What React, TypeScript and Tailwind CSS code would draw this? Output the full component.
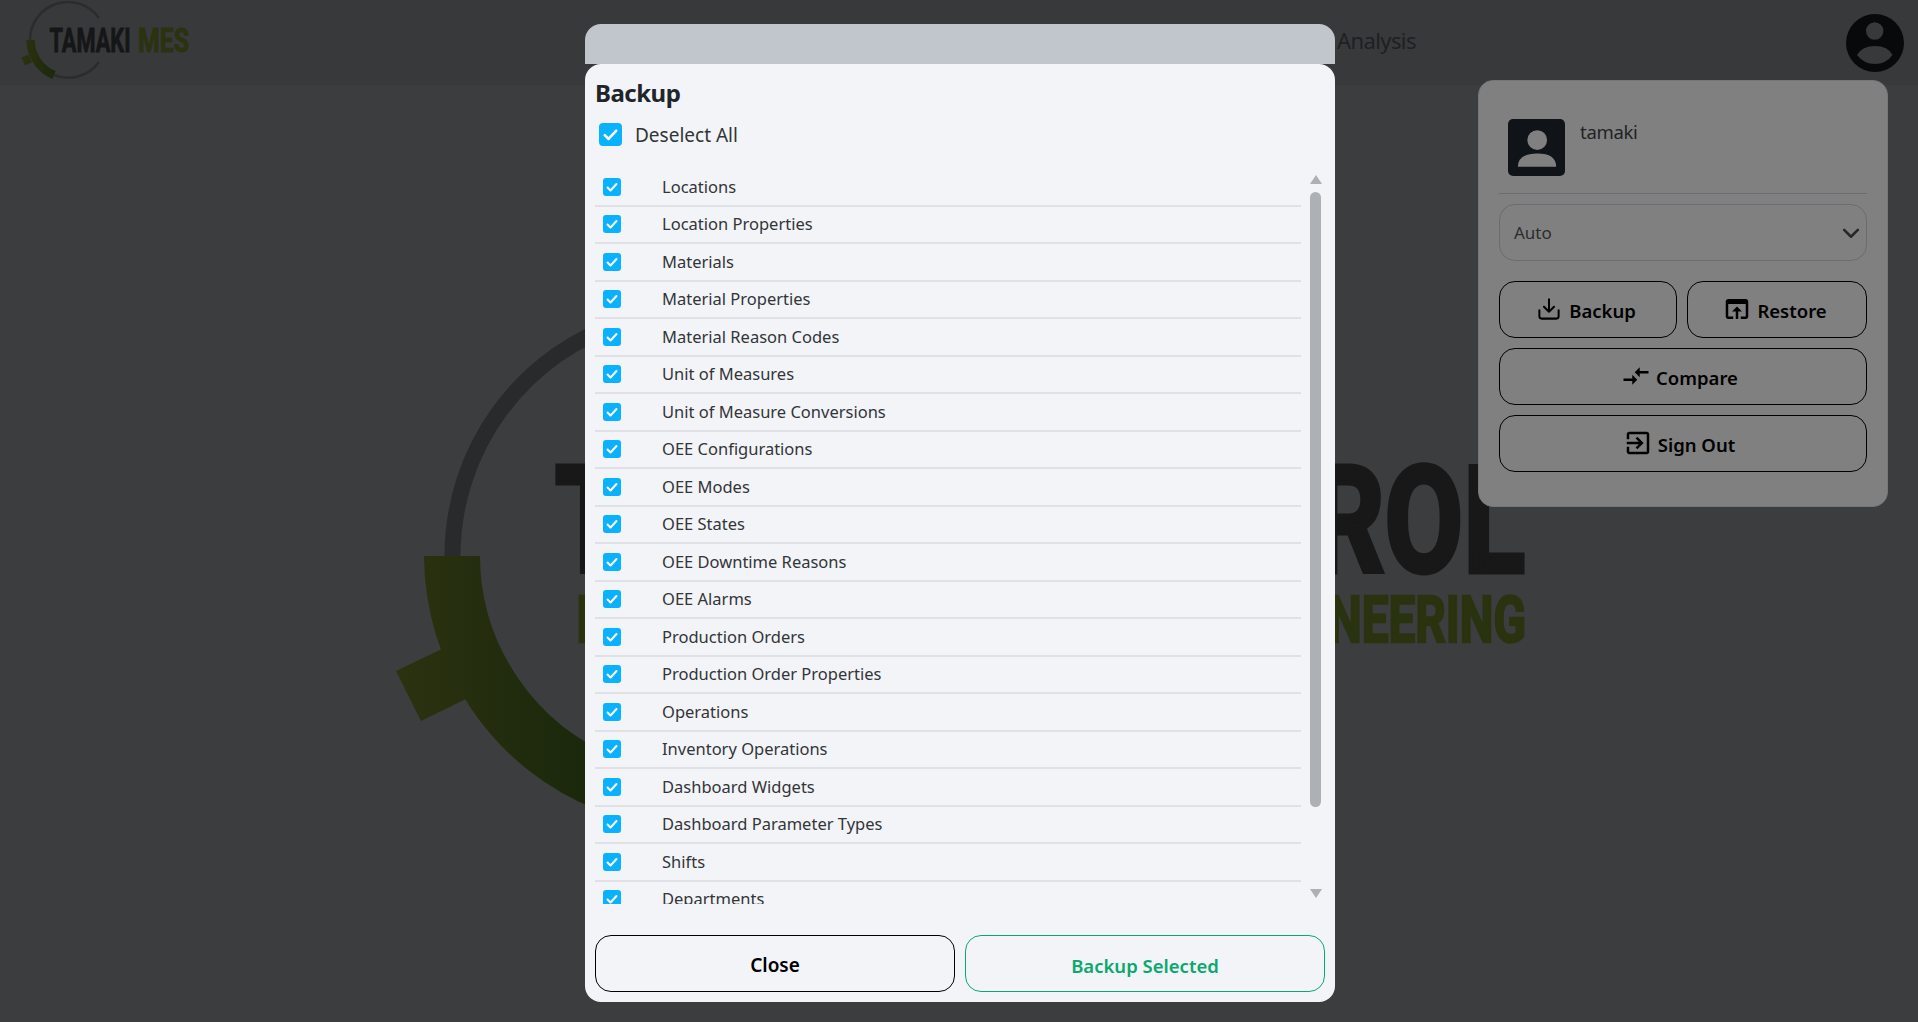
import React from "react";

const ITEMS = [
  "Locations",
  "Location Properties",
  "Materials",
  "Material Properties",
  "Material Reason Codes",
  "Unit of Measures",
  "Unit of Measure Conversions",
  "OEE Configurations",
  "OEE Modes",
  "OEE States",
  "OEE Downtime Reasons",
  "OEE Alarms",
  "Production Orders",
  "Production Order Properties",
  "Operations",
  "Inventory Operations",
  "Dashboard Widgets",
  "Dashboard Parameter Types",
  "Shifts",
  "Departments",
];

function Check({ big }: { big?: boolean }) {
  return (
    <span
      className={
        big
          ? "flex h-[23px] w-[23px] shrink-0 items-center justify-center rounded-[4px] bg-[#0ab1ff]"
          : "flex h-[18px] w-[18px] shrink-0 items-center justify-center rounded-[3px] bg-[#0ab1ff]"
      }
    >
      <svg viewBox="0 0 18 18" className={big ? "h-[23px] w-[23px]" : "h-[18px] w-[18px]"} fill="none" stroke="#fff" strokeWidth="2" strokeLinecap="round" strokeLinejoin="round">
        <path d="M4.5 9.5l3 3 6-6.5" />
      </svg>
    </span>
  );
}

function NavLogo() {
  return (
    <svg viewBox="0 0 200 85" className="h-[85px] w-[200px] shrink-0">
      <defs>
        <linearGradient id="smallGreen" gradientUnits="userSpaceOnUse" x1="21" y1="0" x2="60" y2="0">
          <stop offset="0" stopColor="#2b3210" />
          <stop offset="1" stopColor="#1a270c" />
        </linearGradient>
      </defs>
      <path d="M30 40A38 38 0 0 1 99 18" fill="none" stroke="#2b2c2d" strokeWidth="2.5" />
      <path d="M54 75A38 38 0 0 0 99 62" fill="none" stroke="#2b2c2d" strokeWidth="2.5" />
      <path d="M30.5 40A38 38 0 0 0 54 75" fill="none" stroke="url(#smallGreen)" strokeWidth="8.5" />
      <polygon points="21.2,57.8 25,65.6 32,62.3 28,54.6" fill="url(#smallGreen)" />
      <text x="49.5" y="51.6" textLength="81" lengthAdjust="spacingAndGlyphs" fontSize="33" className="fill-[#151617] stroke-[#151617] stroke-[0.8px] font-['Roboto',sans-serif] font-bold">
        TAMAKI
      </text>
      <text x="138" y="51.6" textLength="51" lengthAdjust="spacingAndGlyphs" fontSize="33" className="fill-[#2a3210] stroke-[#2a3210] stroke-[0.8px] font-['Roboto',sans-serif] font-bold">
        MES
      </text>
    </svg>
  );
}

function Watermark() {
  return (
    <svg viewBox="359 253 1200 600" className="h-[600px] w-[1200px] shrink-0">
      <defs>
        <linearGradient id="bigGreen" gradientUnits="userSpaceOnUse" x1="396" y1="0" x2="600" y2="0">
          <stop offset="0" stopColor="#2b3210" />
          <stop offset="1" stopColor="#1a270c" />
        </linearGradient>
      </defs>
      <path d="M452.5 555A245.5 245.5 0 0 1 899 414" fill="none" stroke="#292a2b" strokeWidth="16" />
      <path d="M608 783A245.5 245.5 0 0 0 899 696" fill="none" stroke="#292a2b" strokeWidth="16" />
      <path d="M452 555A246 246 0 0 0 608 783" fill="none" stroke="url(#bigGreen)" strokeWidth="56" />
      <polygon points="396,670 421,720 470,696 446,646" fill="url(#bigGreen)" />
      <text x="555" y="570.5" textLength="970" lengthAdjust="spacingAndGlyphs" fontSize="149" className="fill-[#181818] stroke-[#181818] stroke-[5px] font-['Roboto',sans-serif] font-bold">
        TAMAKI CONTROL
      </text>
      <text x="576" y="640.7" textLength="950" lengthAdjust="spacingAndGlyphs" fontSize="65.4" className="fill-[#293310] stroke-[#293310] stroke-[2.5px] font-['Roboto',sans-serif] font-bold">
        INDUSTRIAL AUTOMATION &amp; ENGINEERING
      </text>
    </svg>
  );
}

function ActionButton({ children, className }: { children: React.ReactNode; className?: string }) {
  return (
    <div className={"flex h-[57px] items-center justify-center rounded-[16px] border border-black text-[18.5px] font-semibold text-black " + (className ?? "")}>
      {children}
    </div>
  );
}

export default function App() {
  return (
    <div className="relative flex h-[1022px] w-[1918px] flex-col overflow-hidden bg-[#3c3d3f] font-['Noto_Sans',sans-serif]">
      <header className="flex h-[85px] shrink-0 items-center bg-[#38393b]">
        <NavLogo />
        <span className="mb-[6px] ml-[1137px] text-[22px] leading-none tracking-[-0.6px] text-[#1e2022]">Analysis</span>
        <svg viewBox="0 0 58 58" className="ml-auto mr-[14px] h-[58px] w-[58px]">
          <path
            fillRule="evenodd"
            fill="#07090b"
            d="M29 0a29 29 0 1 0 0 58a29 29 0 1 0 0-58ZM28.7 8.3a8.7 8.7 0 1 1 0 17.4a8.7 8.7 0 1 1 0-17.4ZM11 41Q16 32 29 32Q42 32 46.5 41Q40 50 29 50Q18 50 11 41Z"
          />
        </svg>
      </header>

      <main className="flex flex-1 items-center justify-center">
        <Watermark />
      </main>

      {/* Profile popover */}
      <aside className="absolute left-[1478px] top-[80px] flex h-[427px] w-[410px] flex-col rounded-[15px] border border-[#73767a] bg-[#808080] px-[20px] text-[#212325]">
        <div className="ml-[9px] mt-[38px] flex items-start">
          <svg viewBox="0 0 56 56" className="h-[57px] w-[57px] shrink-0">
            <rect width="56" height="56" rx="5" fill="#101418" />
            <circle cx="28.7" cy="20.7" r="9.7" fill="#808080" />
            <path d="M9.7 47Q9.7 34 28.7 34Q47.3 34 47.3 47Z" fill="#808080" />
          </svg>
          <span className="ml-[15px] mt-[1px] text-[18.5px] leading-[24px] tracking-[-0.3px]">tamaki</span>
        </div>
        <div className="mt-[17px] h-px bg-[#696c70]" />
        <div className="mt-[10px] flex h-[57px] items-center justify-between rounded-[16px] border border-[#696c70] pl-[14px] pr-[5px] text-[17px] text-[#2c2d2e]">
          <span>Auto</span>
          <svg viewBox="0 0 16 16" className="h-[20px] w-[20px]" fill="none" stroke="#26272a" strokeWidth="2" strokeLinecap="round" strokeLinejoin="round">
            <path d="m2.5 5.5 5.5 5.5 5.5-5.5" />
          </svg>
        </div>
        <div className="mt-[20px] flex gap-[10px]">
          <ActionButton className="w-[178px] pr-[2px]">
            <svg viewBox="0 0 24 24" className="mb-[2px] mr-[9px] h-[22px] w-[22px]" fill="none" stroke="#000" strokeWidth="2.2" strokeLinecap="round" strokeLinejoin="round">
              <path d="M12 1.5V15M6.5 9.5 12 15l5.5-5.5M1.5 13.5V20a2.5 2.5 0 0 0 2.5 2.5h16a2.5 2.5 0 0 0 2.5-2.5v-6.5" />
            </svg>
            <span className="mt-[2px]">Backup</span>
          </ActionButton>
          <ActionButton className="w-[180px] pr-[5px]">
            <svg viewBox="0 0 24 24" className="mb-[2px] mr-[5px] h-[30px] w-[30px]" fill="#000">
              <path d="M19 4H5c-1.11 0-2 .9-2 2v12c0 1.1.89 2 2 2h4v-2H5V8h14v10h-4v2h4c1.1 0 2-.9 2-2V6c0-1.1-.89-2-2-2zm-7 6l-4 4h3v6h2v-6h3l-4-4z" />
            </svg>
            <span className="mt-[2px]">Restore</span>
          </ActionButton>
        </div>
        <ActionButton className="mt-[10px] pr-[7px]">
          <svg viewBox="0 0 24 24" className="mb-[2px] mr-[5px] h-[30px] w-[30px]" fill="#000">
            <path d="M9.01 14H2v2h7.01v3L13 15l-3.99-4v3zm5.98-1v-3H22V8h-7.01V5L11 9l3.99 4z" />
          </svg>
          <span className="mt-[2px]">Compare</span>
        </ActionButton>
        <ActionButton className="mt-[10px] pr-[8px]">
          <svg viewBox="0 0 24 24" className="mb-[2px] mr-[5px] h-[30px] w-[30px]" fill="#000">
            <path d="M10.09 15.59L11.5 17l5-5-5-5-1.41 1.41L12.67 11H3v2h9.67l-2.58 2.59zM19 3H5c-1.11 0-2 .9-2 2v4h2V5h14v14H5v-4H3v4c0 1.1.89 2 2 2h14c1.1 0 2-.9 2-2V5c0-1.1-.9-2-2-2z" />
          </svg>
          <span className="mt-[2px]">Sign Out</span>
        </ActionButton>
      </aside>

      {/* Backup dialog */}
      <div className="absolute inset-0 flex justify-center pl-[2px] pt-[24px]">
        <section className="flex h-[978px] w-[750px] flex-col">
          <div className="h-[40px] shrink-0 rounded-t-[16px] bg-[#c1c5cc]" />
          <div className="flex min-h-0 flex-1 flex-col rounded-[16px] bg-[#f2f4f8] px-[10px] pb-[10px]">
            <h2 className="mt-[13px] text-[24px] font-bold leading-[32px] tracking-[-0.5px] text-[#212529]">Backup</h2>
            <div className="ml-[4px] mt-[12px] flex h-[26px] items-center">
              <Check big />
              <span className="ml-[13px] mt-[2px] text-[19px] leading-none text-[#333538]">Deselect All</span>
            </div>
            <div className="mt-[22px] flex h-[735px] shrink-0">
              <div className="h-full w-[706px] shrink-0 overflow-hidden">
                {ITEMS.map((item) => (
                  <div key={item} className="box-border flex h-[37.5px] items-center border-b-2 border-[#dfe1e6]">
                    <span className="ml-[8px]">
                      <Check />
                    </span>
                    <span className="ml-[41px] mt-[1px] text-[16.5px] text-[#333538]">{item}</span>
                  </div>
                ))}
              </div>
              <div className="ml-[9px] flex h-full w-[11px] flex-col items-center">
                <svg viewBox="0 0 12 9" className="mt-[6px] h-[9px] w-[12px]">
                  <path d="M6 0 12 9H0Z" fill="#adb0b5" />
                </svg>
                <div className="mt-[8px] h-[615px] w-[11px] rounded-full bg-[#adb0b5]" />
                <svg viewBox="0 0 12 9" className="mt-[82px] h-[9px] w-[12px]">
                  <path d="M6 9 0 0H12Z" fill="#adb0b5" />
                </svg>
              </div>
            </div>
            <div className="mt-auto flex gap-[10px]">
              <div className="flex h-[57px] flex-1 items-center justify-center rounded-[16px] border border-black pt-[4px] text-[19px] font-semibold text-black">Close</div>
              <div className="flex h-[57px] flex-1 items-center justify-center rounded-[16px] border border-[#0aa86e] pt-[4px] text-[18.5px] font-semibold text-[#0aa86e]">Backup Selected</div>
            </div>
          </div>
        </section>
      </div>
    </div>
  );
}
